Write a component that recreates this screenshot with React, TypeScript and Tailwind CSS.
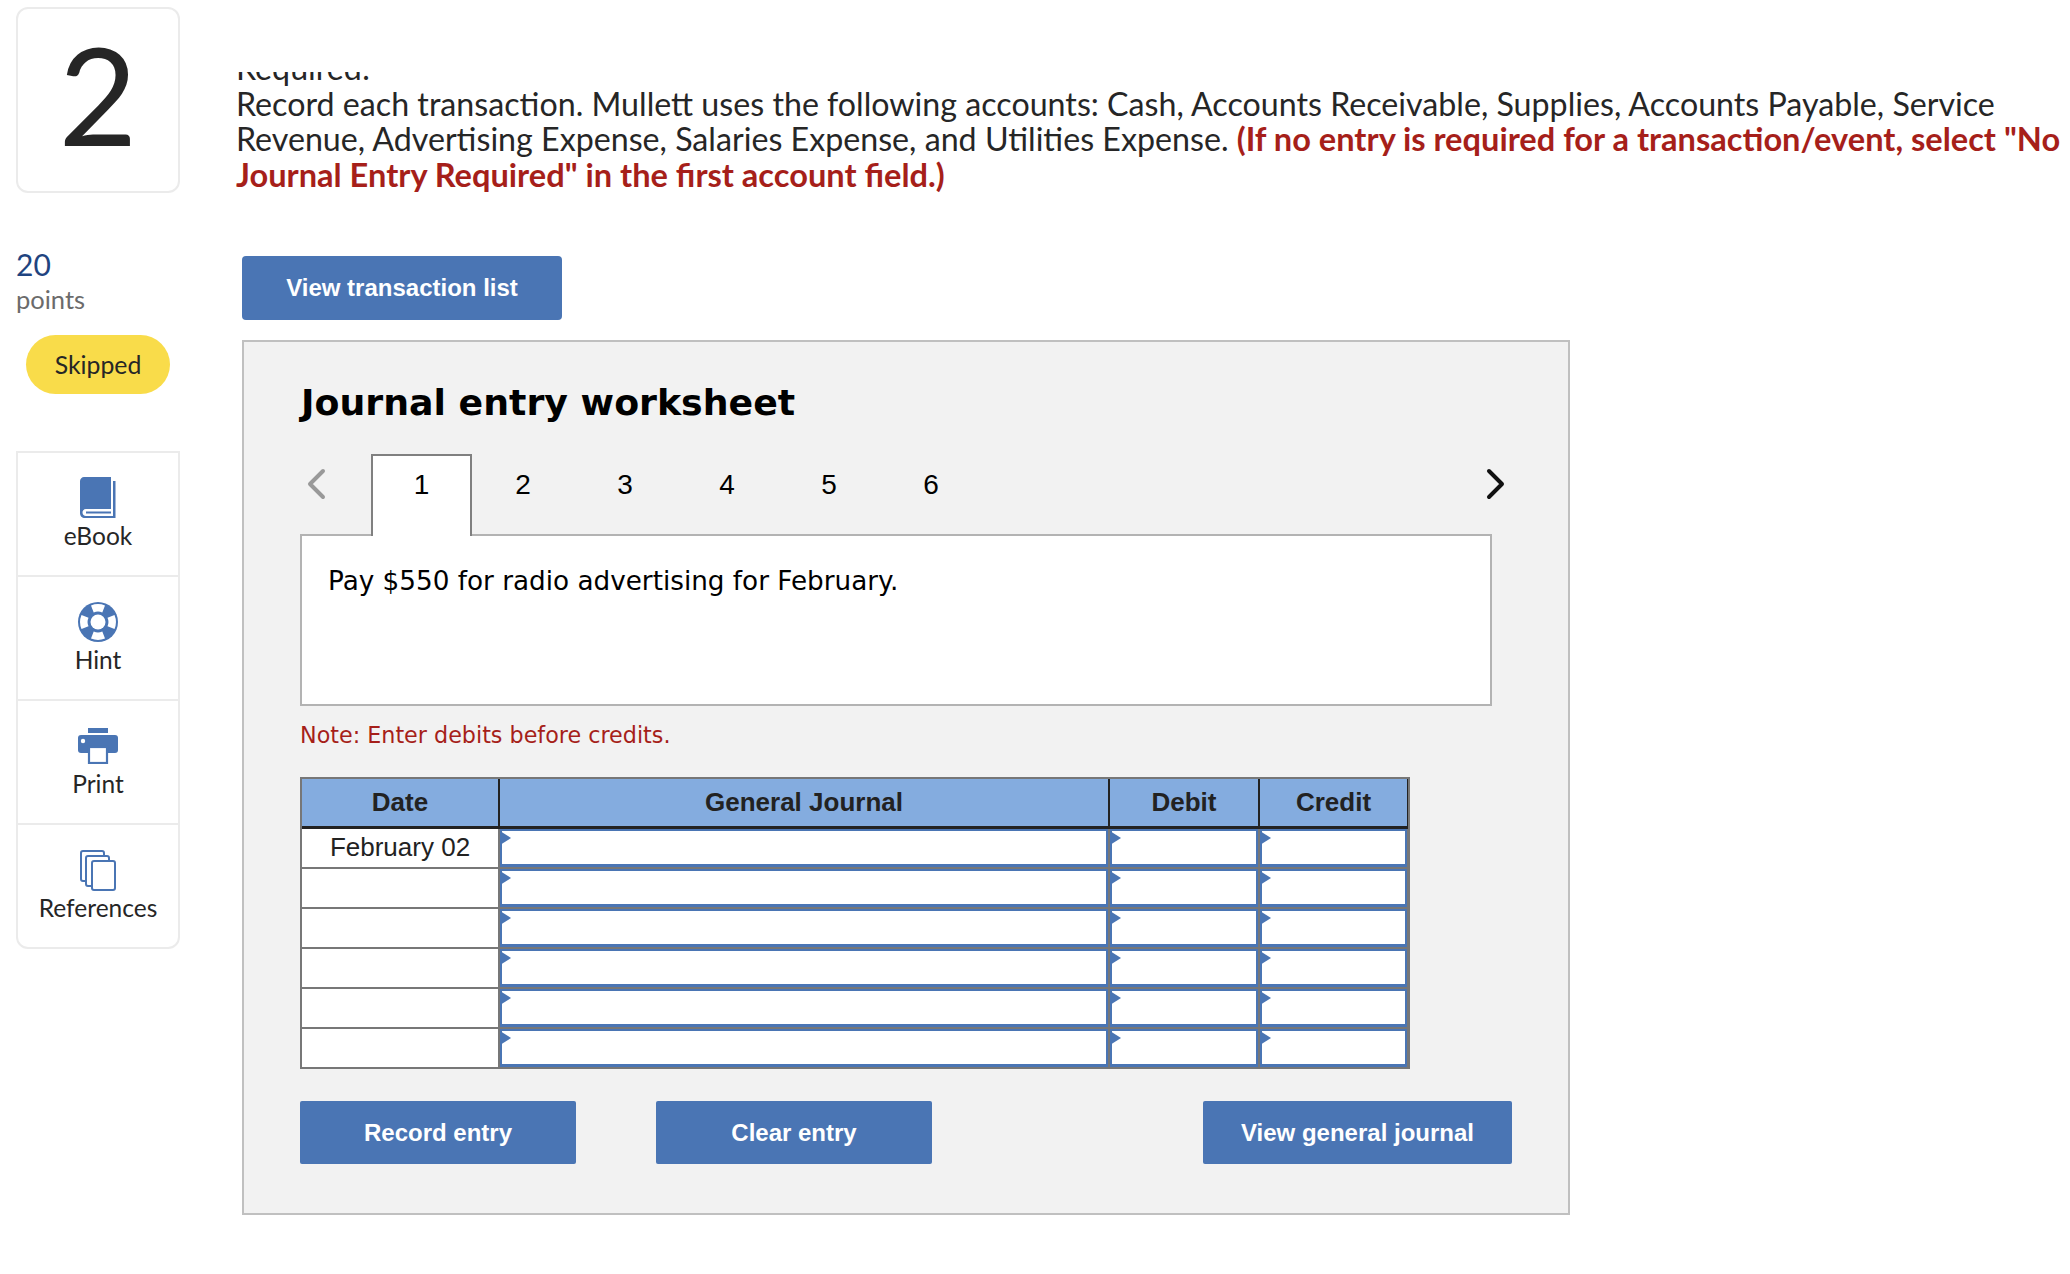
import React from "react";

const sans = "font-['Lato','Noto_Sans',sans-serif]";
const arial = "font-['Liberation_Sans',Arial,sans-serif]";
const dejavu = "font-['DejaVu_Sans',sans-serif]";

function BookIcon() {
  return (
    <svg width="36" height="42" viewBox="0 0 36 42" fill="none">
      <path d="M4 0H31V32H6C3.5 32 2.5 34 2.5 35.500C2.500 37.500 4 39 6 39H33V4H35.500V41H5C2 41 0 39 0 36V4C0 2 2 0 4 0Z" fill="#4a75b4" />
      <rect x="6" y="34.500" width="25" height="2" fill="#4a75b4" />
    </svg>
  );
}

function HintIcon() {
  return (
    <svg width="40" height="40" viewBox="0 0 40 40">
      <circle cx="20" cy="20" r="20" fill="#4a75b4" />
      <circle cx="20" cy="20" r="7.500" fill="#fff" />
      <path d="M13 3.500A18 18 0 0 1 27 3.500L24.300 10.500A10.500 10.500 0 0 0 15.700 10.500Z" fill="#fff" />
      <path d="M13 36.500A18 18 0 0 0 27 36.500L24.300 29.500A10.500 10.500 0 0 1 15.700 29.500Z" fill="#fff" />
      <path d="M3.500 13A18 18 0 0 0 3.500 27L10.500 24.300A10.500 10.500 0 0 1 10.500 15.700Z" fill="#fff" />
      <path d="M36.500 13A18 18 0 0 1 36.500 27L29.500 24.300A10.500 10.500 0 0 0 29.500 15.700Z" fill="#fff" />
    </svg>
  );
}

function PrintIcon() {
  return (
    <svg width="40" height="36" viewBox="0 0 40 36">
      <rect x="10" y="0" width="20" height="5" fill="#4a75b4" />
      <path d="M3 7H37A3 3 0 0 1 40 10V22A3 3 0 0 1 37 25H3A3 3 0 0 1 0 22V10A3 3 0 0 1 3 7Z" fill="#4a75b4" />
      <circle cx="5" cy="13" r="2.200" fill="#fff" />
      <rect x="11" y="19" width="18" height="16" fill="#fff" stroke="#4a75b4" strokeWidth="2.200" />
    </svg>
  );
}

function RefIcon() {
  return (
    <svg width="36" height="41" viewBox="0 0 36 41" fill="none" stroke="#4a75b4" strokeWidth="2">
      <path d="M5.500 31H3A2 2 0 0 1 1 29V3A2 2 0 0 1 3 1H22A2 2 0 0 1 24 3V5" />
      <path d="M11 36H8A2 2 0 0 1 6 34V8A2 2 0 0 1 8 6H27A2 2 0 0 1 29 8V10" />
      <rect x="12" y="11" width="23" height="29" rx="2" />
    </svg>
  );
}

function SideItem({ icon, label, last }: { icon: React.ReactNode; label: string; last?: boolean }) {
  return (
    <div className={`flex flex-col items-center pt-6 ${last ? "h-[122px]" : "h-[124px] border-b-2 border-[#ebebeb]"}`}>
      <div className="flex h-[42px] items-center justify-center">{icon}</div>
      <div className={`mt-[2px] text-[24.500px] leading-[30px] text-[#262626] ${sans}`}>{label}</div>
    </div>
  );
}

function Cell() {
  return (
    <div className="relative border-2 border-b-[3px] border-[#4a75b4] bg-white">
      <svg className="absolute -left-[2px] top-0" width="11" height="14" viewBox="0 0 11 14">
        <path d="M0 0L11 7L0 14Z" fill="#4a75b4" />
      </svg>
    </div>
  );
}

const cols = "grid-cols-[196px_608px_148px_147px]";
const dates = ["February 02", "", "", "", "", ""];

export default function App() {
  return (
    <div className="flex h-[1274px] w-[2070px] overflow-hidden bg-white">
      <aside className="ml-4 w-[226px] shrink-0 pt-[7px]">
        <div className="flex h-[186px] w-[164px] items-center justify-center rounded-xl border-2 border-[#ebebeb] pb-[12px]">
          <span className={`text-[136px] leading-none text-[#262626] ${sans}`}>2</span>
        </div>
        <div className={`mt-[53px] text-[30px] leading-[36px] text-[#1f4480] ${sans}`}>20</div>
        <div className={`text-[25.500px] leading-[34px] text-[#6b6b6b] ${sans}`}>points</div>
        <div className={`ml-[10px] mt-[19px] flex h-[59px] w-[144px] items-center justify-center rounded-full bg-[#f9dc4a] text-[24.800px] text-[#262626] ${sans}`}>
          Skipped
        </div>
        <div className="mt-[57px] w-[164px] rounded-b-xl border-2 border-[#ebebeb]">
          <SideItem icon={<BookIcon />} label="eBook" />
          <SideItem icon={<HintIcon />} label="Hint" />
          <SideItem icon={<PrintIcon />} label="Print" />
          <SideItem icon={<RefIcon />} label="References" last />
        </div>
      </aside>

      <main className="min-w-0 flex-1">
        <div className="ml-[-6px] mt-[72px] h-[124px] w-[1840px] overflow-hidden">
          <div className={`mt-[-22px] text-[32.200px] leading-[35.500px] text-[#262626] ${sans}`}>
            <div>Required:</div>
            <div>
              Record each transaction. Mullett uses the following accounts: Cash, Accounts Receivable, Supplies, Accounts Payable, Service Revenue, Advertising Expense, Salaries Expense, and Utilities Expense.{" "}
              <span className="text-[32.600px] font-bold text-[#a61f1a]">
                (If no entry is required for a transaction/event, select "No Journal Entry Required" in the first account field.)
              </span>
            </div>
          </div>
        </div>

        <button className={`mt-[60px] block h-16 w-[320px] rounded-[4px] bg-[#4a75b4] text-[24px] font-bold text-white ${arial}`}>
          View transaction list
        </button>

        <section className="mt-[20px] h-[875px] w-[1328px] border-2 border-[#c0c0c0] bg-[#f2f2f2] pl-[56px] pt-[39px]">
          <h1 className={`pl-[1px] text-[36.300px] font-bold leading-[44px] text-black ${dejavu}`}>Journal entry worksheet</h1>

          <div className="relative mt-[28px] flex h-[81px] w-[1192px] pl-[71px]">
            <svg className="absolute left-[6px] top-[15px]" width="20" height="32" viewBox="0 0 20 32" fill="none" stroke="#999" strokeWidth="4" strokeLinecap="round" strokeLinejoin="round">
              <path d="M17 3L4 16L17 29" />
            </svg>
            <svg className="absolute left-[1186px] top-[15px]" width="20" height="32" viewBox="0 0 20 32" fill="none" stroke="#111" strokeWidth="4" strokeLinecap="round" strokeLinejoin="round">
              <path d="M3 3L16 16L3 29" />
            </svg>
            <div className={`relative z-10 mt-[1px] flex h-[82px] w-[101px] justify-center border-2 border-b-0 border-[#808080] bg-white pt-[11px] text-[28px] leading-[36px] text-black ${arial}`}>1</div>
            {["2", "3", "4", "5", "6"].map((n) => (
              <div key={n} className={`flex w-[102px] justify-center pt-[14px] text-[28px] leading-[36px] text-black ${arial}`}>{n}</div>
            ))}
          </div>

          <div className={`h-[172px] w-[1192px] border-2 border-[#b3b3b3] bg-white px-[26px] pt-[27px] text-[26.250px] leading-[36px] text-black ${dejavu}`}>
            Pay $550 for radio advertising for February.
          </div>

          <p className={`mt-[14px] text-[22.250px] leading-[30px] text-[#a61f1a] ${dejavu}`}>Note: Enter debits before credits.</p>

          <div className="mt-[27px] w-[1110px] border-2 border-[#777] bg-[#777]">
            <div className={`grid ${cols} gap-x-[2px] border-b-[3px] border-[#222] bg-[#222] text-center text-[26px] font-bold leading-[47px] text-[#222] ${arial}`}>
              {["Date", "General Journal", "Debit", "Credit"].map((h) => (
                <div key={h} className="bg-[#84acdf]">{h}</div>
              ))}
            </div>
            <div className="grid grid-cols-1 gap-y-[2px]">
              {dates.map((d, i) => (
                <div key={i} className={`grid h-[38px] ${cols} gap-x-[2px]`}>
                  <div className={`bg-white text-center text-[26px] leading-[36px] text-[#222] ${arial}`}>{d}</div>
                  <Cell />
                  <Cell />
                  <Cell />
                </div>
              ))}
            </div>
          </div>

          <div className={`mt-[32px] flex w-[1212px] text-[24px] font-bold text-white ${arial}`}>
            <button className="h-[63px] w-[276px] rounded-[2px] bg-[#4a75b4]">Record entry</button>
            <button className="ml-[80px] h-[63px] w-[276px] rounded-[2px] bg-[#4a75b4]">Clear entry</button>
            <button className="ml-auto h-[63px] w-[309px] rounded-[2px] bg-[#4a75b4]">View general journal</button>
          </div>
        </section>
      </main>
    </div>
  );
}
